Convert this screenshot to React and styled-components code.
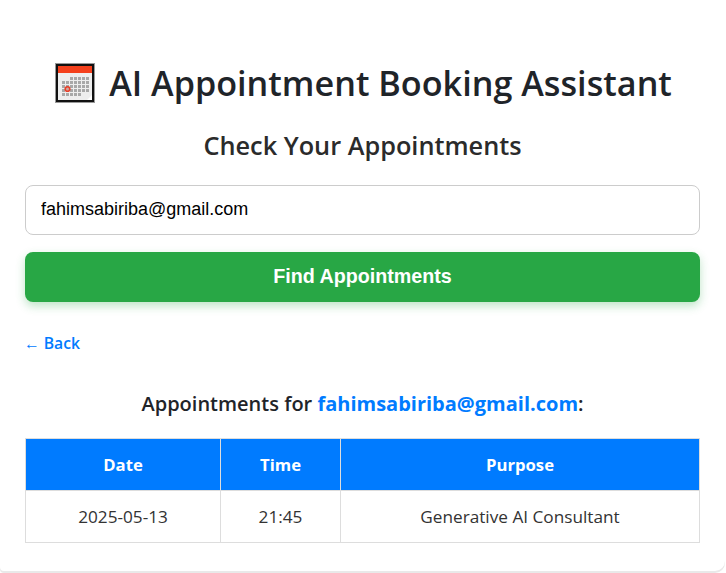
import React from 'react';
import styled, { createGlobalStyle } from 'styled-components';

const GlobalStyle = createGlobalStyle`
  html, body {
    margin: 0;
    padding: 0;
    background: #ffffff;
    font-family: "Open Sans", "Noto Sans", sans-serif;
  }
`;

const Page = styled.div`
  height: 573px;
  overflow: hidden;
  background: #ffffff;
`;

const Card = styled.main`
  box-sizing: border-box;
  width: 725px;
  height: 571px;
  padding: 58px 25px 0;
  background: #ffffff;
  border-radius: 0 0 10px 4px;
  box-shadow: 0 2px 0 #e9e9e9;
`;

const Title = styled.h1`
  display: flex;
  justify-content: center;
  align-items: center;
  gap: 14px;
  box-sizing: border-box;
  height: 50px;
  margin: 0;
  padding: 0 0 2px 2px;
  font-size: 34.2px;
  font-weight: 600;
  color: #1f2429;
  white-space: nowrap;

  svg {
    margin-top: 2px;
  }
`;

const SubTitle = styled.h2`
  height: 36px;
  margin: 19px 0 22px;
  font-size: 25.3px;
  line-height: 36px;
  font-weight: 600;
  text-align: center;
  color: #2b2b2b;
`;

const EmailInput = styled.input`
  display: block;
  box-sizing: border-box;
  width: 100%;
  height: 50px;
  padding: 0 15px 2px;
  border: 1px solid #cccccc;
  border-radius: 8px;
  background: #ffffff;
  font-family: "Liberation Sans", Arial, sans-serif;
  font-size: 18px;
  color: #000000;
`;

const FindButton = styled.button`
  display: block;
  width: 100%;
  height: 50px;
  margin-top: 17px;
  padding: 0 0 2px;
  border: 0;
  border-radius: 8px;
  background: #28a745;
  box-shadow: 0 4px 10px rgba(40, 167, 69, 0.3);
  font-family: "Liberation Sans", Arial, sans-serif;
  font-size: 19.7px;
  font-weight: 700;
  color: #ffffff;
`;

const BackLink = styled.a`
  display: block;
  height: 24px;
  margin: 29px 0 0 -1px;
  font-size: 15.7px;
  line-height: 24px;
  font-weight: 600;
  color: #007bff;
`;

const ResultHeading = styled.h3`
  height: 30px;
  margin: 34px 0 19px;
  font-size: 20px;
  line-height: 30px;
  font-weight: 600;
  text-align: center;
  color: #1f2429;
`;

const Email = styled.span`
  font-weight: 700;
  color: #007bff;
`;

const Table = styled.table`
  box-sizing: border-box;
  width: 674px;
  border-collapse: collapse;
  table-layout: fixed;
`;

const Th = styled.th`
  box-sizing: border-box;
  width: ${({ $width }) => $width}px;
  height: 52px;
  padding: 0;
  border: 1px solid #dddddd;
  background: #007bff;
  font-size: 16.7px;
  font-weight: 700;
  color: #ffffff;
`;

const Td = styled.td`
  box-sizing: border-box;
  height: 52px;
  padding: 0 0 1px;
  border: 1px solid #dddddd;
  font-size: 17.2px;
  text-align: center;
  color: #333333;
`;

const CalendarIcon = () => (
  <svg width="40" height="40" viewBox="0 0 40 40" aria-hidden="true">
    <rect x="0.5" y="0.5" width="39" height="39" fill="#111" stroke="#999" strokeWidth="1" />
    <rect x="3" y="3" width="34" height="34" fill="#eeeeee" />
    <rect x="3" y="3" width="34" height="7" fill="#f4401c" />
    {[0, 1, 2, 3, 4].map((row) =>
      [0, 1, 2, 3, 4, 5, 6].map((col) =>
        (row === 0 && col < 2) || (row === 4 && col > 4) ? null : (
          <rect key={`${row}-${col}`} x={7 + col * 4} y={14 + row * 4} width="3" height="3" fill="#a8a8a8" />
        )
      )
    )}
    <circle cx="12.5" cy="26" r="2.3" fill="#c9a9a0" stroke="#e8402a" strokeWidth="1.6" />
    <path d="M32 37l5-5v5z" fill="#ffffff" />
  </svg>
);

export default function App() {
  return (
    <Page>
      <GlobalStyle />
      <Card>
        <Title>
          <CalendarIcon />
          AI Appointment Booking Assistant
        </Title>
        <SubTitle>Check Your Appointments</SubTitle>
        <EmailInput type="email" defaultValue="fahimsabiriba@gmail.com" />
        <FindButton type="button">Find Appointments</FindButton>
        <BackLink>← Back</BackLink>
        <ResultHeading>
          Appointments for <Email>fahimsabiriba@gmail.com</Email>:
        </ResultHeading>
        <Table>
          <thead>
            <tr>
              <Th $width={195}>Date</Th>
              <Th $width={120}>Time</Th>
              <Th $width={359}>Purpose</Th>
            </tr>
          </thead>
          <tbody>
            <tr>
              <Td>2025-05-13</Td>
              <Td>21:45</Td>
              <Td>Generative AI Consultant</Td>
            </tr>
          </tbody>
        </Table>
      </Card>
    </Page>
  );
}
